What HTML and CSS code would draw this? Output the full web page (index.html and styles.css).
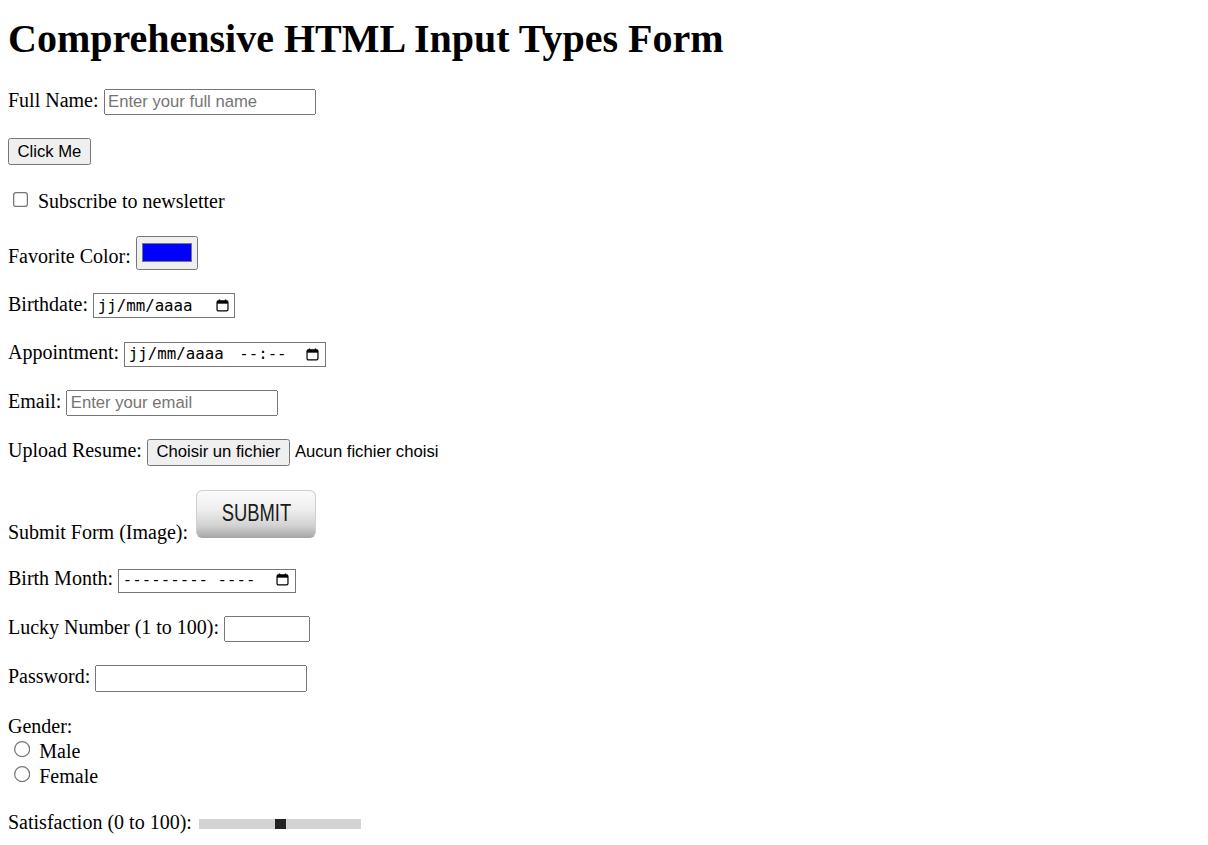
FILE: index.html
```html
<!DOCTYPE html>
<html lang="fr">
<head>
<meta charset="utf-8">
<title>Comprehensive HTML Input Types Form</title>
<link rel="stylesheet" href="styles.css">
</head>
<body>
<div class="page">
  <h1 class="title">Comprehensive HTML Input Types Form</h1>
  <form class="form">
    <div class="row"><label for="fullname">Full Name:</label> <input class="field text" type="text" id="fullname" placeholder="Enter your full name"></div>
    <div class="row"><button class="btn" type="button">Click Me</button></div>
    <div class="row"><input type="checkbox" id="subscribe"> <label for="subscribe">Subscribe to newsletter</label></div>
    <div class="row"><label for="color">Favorite Color:</label> <input type="color" id="color" value="#0000ff"></div>
    <div class="row">Birthdate: <span class="date w-date"><span class="date-text">jj/mm/aaaa</span><svg class="cal" viewBox="0 0 15 15"><path d="M4 0.5v2.5M11 0.5v2.5" stroke="#000" stroke-width="1.6"/><rect x="1.2" y="2.2" width="12.6" height="11.6" rx="1.6" fill="none" stroke="#000" stroke-width="1.4"/><rect x="1.2" y="2.2" width="12.6" height="3.2" fill="#000"/></svg></span></div>
    <div class="row">Appointment: <span class="date w-datetime"><span class="date-text">jj/mm/aaaa<span class="time">--:--</span></span><svg class="cal" viewBox="0 0 15 15"><path d="M4 0.5v2.5M11 0.5v2.5" stroke="#000" stroke-width="1.6"/><rect x="1.2" y="2.2" width="12.6" height="11.6" rx="1.6" fill="none" stroke="#000" stroke-width="1.4"/><rect x="1.2" y="2.2" width="12.6" height="3.2" fill="#000"/></svg></span></div>
    <div class="row"><label for="email">Email:</label> <input class="field text" type="email" id="email" placeholder="Enter your email"></div>
    <div class="row">Upload Resume: <span class="file"><button class="btn file-btn" type="button">Choisir un fichier</button><span class="file-name">Aucun fichier choisi</span></span></div>
    <div class="row">Submit Form (Image): <span class="img-submit" role="button"><span class="img-label">SUBMIT</span></span></div>
    <div class="row">Birth Month: <span class="date w-month"><span class="date-text">--------- ----</span><svg class="cal" viewBox="0 0 15 15"><path d="M4 0.5v2.5M11 0.5v2.5" stroke="#000" stroke-width="1.6"/><rect x="1.2" y="2.2" width="12.6" height="11.6" rx="1.6" fill="none" stroke="#000" stroke-width="1.4"/><rect x="1.2" y="2.2" width="12.6" height="3.2" fill="#000"/></svg></span></div>
    <div class="row"><label for="lucky">Lucky Number (1 to 100):</label> <input class="field number" type="number" id="lucky" min="1" max="100"></div>
    <div class="row"><label for="pwd">Password:</label> <input class="field text" type="password" id="pwd"></div>
    <div class="row">
      <div>Gender:</div>
      <div><input type="radio" name="gender" id="male"> <label for="male">Male</label></div>
      <div><input type="radio" name="gender" id="female"> <label for="female">Female</label></div>
    </div>
    <div class="row"><label for="sat">Satisfaction (0 to 100):</label> <input class="slider" type="range" id="sat" min="0" max="100" value="50"></div>
  </form>
</div>
</body>
</html>
```
FILE: styles.css
```css
html, body {
  background: #fff;
}
body {
  margin: 0 8px 8px;
  color: #000;
  font-family: "Liberation Serif", "Times New Roman", serif;
  font-size: 16px;
}
.page {
  zoom: 1.25;
}
.title {
  font-size: 2em;
  font-weight: bold;
  margin: 12px 0 21.44px;
}
.form {
  margin: 0;
}
.row {
  margin-bottom: 18.4px;
}
.field {
  font-family: "Liberation Sans", Arial, sans-serif;
  font-size: 13.333px;
}
.text {
  box-sizing: border-box;
  width: 169.6px;
}
.number {
  box-sizing: border-box;
  width: 68.8px;
}
.btn {
  font-family: "Liberation Sans", Arial, sans-serif;
  font-size: 13.333px;
}
.file {
  font-family: "Liberation Sans", Arial, sans-serif;
  font-size: 13.333px;
}
.file-btn {
  margin-right: 4px;
}
.date {
  display: inline-flex;
  align-items: center;
  box-sizing: border-box;
  height: 20px;
  padding: 1px 2px 1px 3px;
  border: 1px solid #767676;
  background: #fff;
  font-family: "DejaVu Sans Mono", "Liberation Mono", monospace;
  font-size: 12.6px;
  line-height: 16px;
  vertical-align: baseline;
}
.w-date { width: 113.9px; }
.w-datetime { width: 161.3px; }
.w-month {
  width: 142.2px;
  height: 19.2px;
  padding-top: 0;
  padding-bottom: 1.6px;
}
.date-text {
  flex: 1;
  white-space: pre;
}
.time {
  margin-left: 12.4px;
}
.cal {
  width: 10.4px;
  height: 10.4px;
  margin-right: 2.4px;
  flex: none;
}
.img-submit {
  display: inline-block;
  box-sizing: border-box;
  width: 96px;
  height: 38.4px;
  margin: 0.8px 0 0.8px 2.4px;
  overflow: hidden;
  vertical-align: baseline;
  text-align: center;
  border: 1px solid #cfcfcf;
  border-bottom-color: #a8a8a8;
  border-radius: 5px;
  background: linear-gradient(#fbfbfb 0%, #eeeeee 40%, #d2d2d2 75%, #a9a9a9 100%);
  cursor: pointer;
}
.img-label {
  display: inline-block;
  margin-top: 7.2px;
  font-family: "Liberation Sans", Arial, sans-serif;
  font-size: 18.4px;
  line-height: 22px;
  color: #1b1b1b;
  transform: scaleX(0.8);
}
.slider {
  -webkit-appearance: none;
  appearance: none;
  width: 129.6px;
  height: 8px;
  margin: 2px;
  background: #d3d3d3;
  outline: none;
}
.slider::-webkit-slider-thumb {
  -webkit-appearance: none;
  appearance: none;
  width: 9px;
  height: 8px;
  background: #222;
  border: none;
}
```
